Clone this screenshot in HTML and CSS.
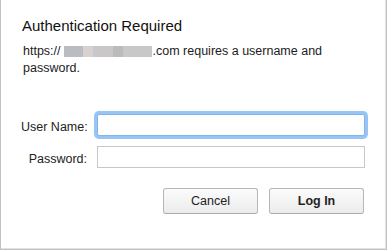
FILE: index.html
```html
<!DOCTYPE html>
<html lang="en">
<head>
  <meta charset="UTF-8" />
  <meta name="viewport" content="width=device-width, initial-scale=1" />
  <title>Authentication Required</title>
  <link rel="stylesheet" href="styles.css">
</head>
<body>

<div class="dialog">
  <h2 class="title">Authentication Required</h2>
  <p class="message">https://<span class="blur"><span class="b1"></span><span class="b2"></span><span class="b3"></span><span class="b4"></span><span class="b5"></span></span>.com requires a username and<br>password.</p>

  <div class="form">
    <label for="username">User Name:</label>
    <input type="text" id="username" class="focused" />
    <label for="password">Password:</label>
    <input type="password" id="password" />
  </div>

  <div class="actions">
    <button>Cancel</button>
    <button class="primary">Log In</button>
  </div>
</div>

</body>
</html>
```

FILE: styles.css
```css
body {
  margin: 0;
  background: #ffffff;
  font-family: "Liberation Sans", Arial, sans-serif;
  color: #1c1c1c;
}

.dialog {
  box-sizing: border-box;
  width: 387px;
  height: 250px;
  padding: 17px 21px 0 21px;
  border: 1px solid #c2c2c2;
  border-top: none;
  box-shadow: inset -1px -1px 0 #e2e2e2;
}

.title {
  margin: 0;
  font-size: 15px;
  font-weight: normal;
  line-height: 18px;
  color: #111;
}

.message {
  margin: 8px 0 0 1px;
  font-size: 12.5px;
  line-height: 17px;
}

.blur {
  display: inline-flex;
  vertical-align: -2px;
  height: 11px;
  margin: 0 1px 0 3px;
}
.blur span { display: block; height: 100%; }
.b1 { width: 19px; background: #b9bdc1; }
.b2 { width: 10px; background: #d7d1d0; }
.b3 { width: 20px; background: #c9c7c8; }
.b4 { width: 10px; background: #bcbbbc; }
.b5 { width: 29px; background: #c9c8c9; }

.form {
  display: grid;
  grid-template-columns: 66px 1fr;
  column-gap: 10px;
  row-gap: 10px;
  margin-top: 37px;
  margin-left: -1px;
  align-items: center;
}

.form label {
  text-align: right;
  white-space: nowrap;
  font-size: 12.5px;
  padding-top: 3px;
  color: #222;
}

.form input {
  box-sizing: border-box;
  height: 22px;
  margin: 0;
  border: 1px solid #c8c8c8;
  background: #fff;
  font-size: 13px;
  outline: none;
}

.form input.focused {
  border-color: #82b5ec;
  box-shadow: 0 0 0 3px #97c5f6;
  border-radius: 2px;
}

.actions {
  display: flex;
  justify-content: flex-end;
  gap: 11px;
  margin-top: 20px;
  margin-right: 1px;
}

button {
  width: 95px;
  height: 26px;
  border: 1px solid #b7b7b7;
  border-bottom-color: #a9a9a9;
  border-radius: 3px;
  background: linear-gradient(#fbfbfb, #ececec);
  font-family: "Liberation Sans", Arial, sans-serif;
  font-size: 12.5px;
  color: #222;
  cursor: pointer;
}

button.primary {
  font-weight: bold;
}
```
